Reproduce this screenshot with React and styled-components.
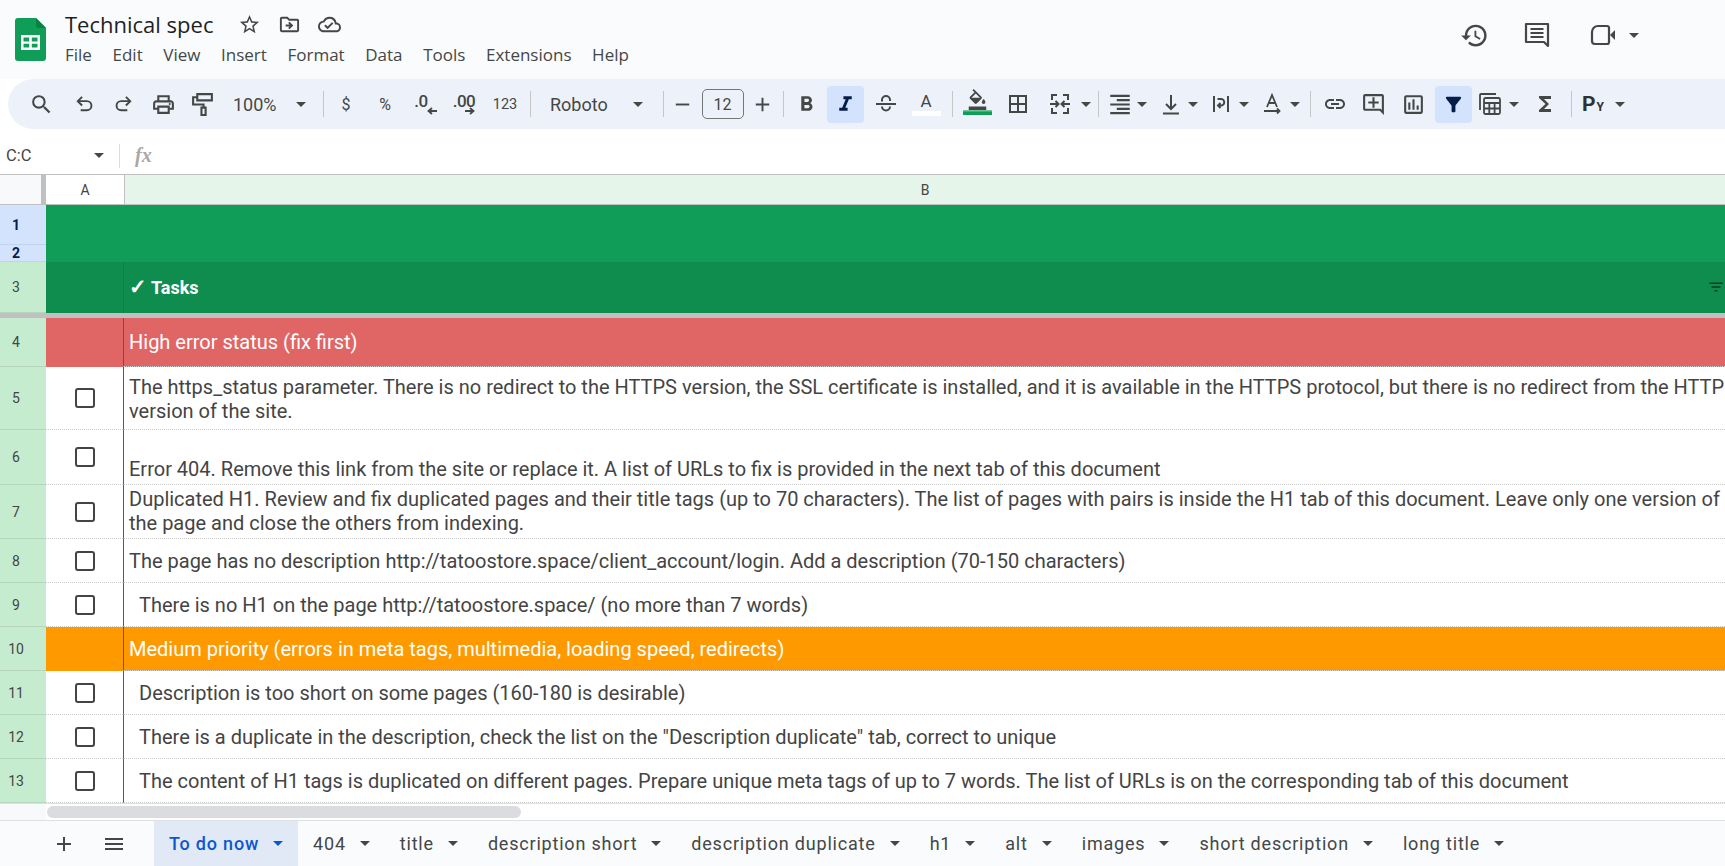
import styled, { createGlobalStyle } from 'styled-components';
import {
  MdSearch, MdOutlinePrint, MdRemove, MdAdd, MdBorderAll, MdFormatAlignRight,
  MdFormatColorFill, MdLink, MdOutlineAddComment, MdOutlineInsertChart, MdFilterAlt,
  MdFunctions, MdHistory, MdStarBorder, MdOutlineDriveFileMove, MdOutlineCloudDone,
  MdMenu, MdFilterList, MdFormatBold, MdFormatItalic,
} from 'react-icons/md';

const GlobalStyle = createGlobalStyle`
  html, body { margin: 0; padding: 0; height: 100%; background: #fff; overflow: hidden; }
  body { font-family: Roboto, "Liberation Sans", sans-serif; }
`;

const Page = styled.div`
  width: 1725px;
  height: 866px;
  display: flex;
  flex-direction: column;
  overflow: hidden;
`;

// top bar
const Header = styled.header`
  height: 79px;
  flex: none;
  background: #f9fbfd;
  display: flex;
  align-items: flex-start;
  padding-left: 15px;
  box-sizing: border-box;
`;
const Logo = styled.svg`
  width: 31px;
  height: 43px;
  margin-top: 18px;
  flex: none;
`;
const TitleBlock = styled.div`
  margin-left: 19px;
  padding-top: 10px;
  flex: 1;
`;
const TitleRow = styled.div`
  display: flex;
  align-items: center;
  height: 28px;
  color: #444746;
`;
const Title = styled.span`
  font-family: "Open Sans", Roboto, sans-serif;
  font-size: 22px;
  color: #1f1f1f;
  width: 164px;
`;
const TitleIcon = styled.span`
  width: 40px;
  display: flex;
  justify-content: center;
  font-size: 23px;
`;
const MenuRow = styled.nav`
  display: flex;
  gap: 20.6px;
  margin-top: 5px;
  font-family: "Open Sans", Roboto, sans-serif;
  font-size: 17px;
  line-height: 24px;
  color: #444746;
`;
const Actions = styled.div`
  display: flex;
  align-items: center;
  height: 70px;
  color: #444746;
  padding-right: 86px;
`;
const ActionIcon = styled.span`
  display: flex;
  font-size: 29px;
  margin-left: ${p => p.$ml || 0}px;
`;

// toolbar
const Toolbar = styled.div`
  height: 50px;
  flex: none;
  margin-left: 8px;
  padding-left: 15px;
  background: #edf2fa;
  border-radius: 25px 0 0 25px;
  display: flex;
  align-items: center;
  color: #444746;
`;
const Tool = styled.span`
  flex: none;
  width: ${p => p.$w || 37}px;
  height: 37px;
  margin-left: ${p => p.$ml || 0}px;
  display: flex;
  align-items: center;
  justify-content: center;
  border-radius: 4px;
  font-size: ${p => p.$size || 23}px;
  background: ${p => (p.$on ? '#d3e3fd' : 'transparent')};
  color: ${p => (p.$on ? '#041e49' : 'inherit')};
`;
const ToolText = styled(Tool)`
  font-size: ${p => p.$size || 16}px;
`;
const Sep = styled.span`
  flex: none;
  width: 1px;
  height: 26px;
  background: #c7c7c7;
  margin-left: ${p => p.$ml || 0}px;
`;
const SelectLabel = styled.span`
  flex: none;
  width: ${p => p.$w}px;
  margin-left: ${p => p.$ml || 0}px;
  font-size: 18px;
`;
const Caret = styled.span`
  flex: none;
  width: 0;
  height: 0;
  box-sizing: content-box;
  border-left: 5px solid transparent;
  border-right: 5px solid transparent;
  border-top: 5px solid ${p => p.$color || '#444746'};
  margin-left: ${p => p.$ml || 0}px;
`;
const SizeBox = styled.span`
  flex: none;
  width: 40px;
  height: 28px;
  margin-left: ${p => p.$ml || 0}px;
  border: 1px solid #747775;
  border-radius: 5px;
  display: flex;
  align-items: center;
  justify-content: center;
  font-size: 16px;
`;
const Decimal = styled.span`
  position: relative;
  font-size: 17px;
  line-height: 14px;
  font-weight: 500;
  letter-spacing: -0.5px;
  top: -3px;
  left: ${p => p.$left || 0}px;
`;
const DecimalArrow = styled.svg`
  position: absolute;
  right: ${p => p.$right}px;
  top: 13px;
  width: 10px;
  height: 8px;
`;
const ColorLetter = styled.span`
  display: flex;
  flex-direction: column;
  align-items: center;
  font-size: 17px;
  line-height: 20px;
  margin-top: -1px;
`;
const Swatch = styled.span`
  display: block;
  width: 29px;
  height: 5px;
  background: ${p => p.$color};
  box-shadow: inset 0 1.5px 0 #ffffff66;
`;
const FillIcon = styled.span`
  display: flex;
  flex-direction: column;
  align-items: center;
  font-size: 21px;
  margin-top: -5px;
`;
const Pv = styled.span`
  font-weight: 700;
  font-size: 21px;
  color: #303030;
  & > small { font-size: 12px; margin-left: 1px; }
`;

// name box / formula bar
const FormulaBar = styled.div`
  height: 45px;
  flex: none;
  box-sizing: border-box;
  padding-top: 8px;
  display: flex;
  align-items: center;
  background: #fff;
  color: #444746;
`;
const NameBox = styled.div`
  width: 120px;
  box-sizing: border-box;
  padding: 0 15px 0 6px;
  display: flex;
  align-items: center;
  justify-content: space-between;
  font-size: 16.5px;
  border-right: 1px solid #dadce0;
  height: 24px;
`;
const Fx = styled.span`
  margin-left: 15px;
  font-family: "Liberation Serif", serif;
  font-style: italic;
  font-size: 20px;
  color: #a8a8a8;
  font-weight: 700;
`;

// sheet
const Sheet = styled.div`
  flex: none;
  border-top: 1px solid #c0c0c0;
`;
const ColHeaders = styled.div`
  display: flex;
  height: 29px;
  border-bottom: 1px solid #c0c0c0;
  font-size: 14px;
  color: #444;
`;
const Corner = styled.div`
  width: 41px;
  background: #f8f9fa;
  border-right: 5px solid #c0c0c0;
`;
const ColHead = styled.div`
  display: flex;
  align-items: center;
  justify-content: center;
  box-sizing: border-box;
  width: ${p => (p.$grow ? 'auto' : '79px')};
  flex: ${p => (p.$grow ? 1 : 'none')};
  background: ${p => (p.$grow ? '#e6f5ea' : '#fff')};
  border-right: ${p => (p.$grow ? 'none' : '1px solid #c0c0c0')};
`;
const Row = styled.div`
  display: flex;
  height: ${p => p.$h}px;
  box-sizing: border-box;
  background: ${p => p.$bg || '#fff'};
  color: ${p => (p.$bg ? '#fff' : '#444')};
`;
const RowNum = styled.div`
  width: 46px;
  flex: none;
  box-sizing: border-box;
  padding-right: 14px;
  display: flex;
  align-items: center;
  justify-content: center;
  font-size: 14px;
  background: ${p => (p.$active ? '#d3e3fd' : '#c6ecd0')};
  color: ${p => (p.$active ? '#041e49' : '#444')};
  font-weight: ${p => (p.$active ? 700 : 400)};
  border-bottom: 1px solid ${p => (p.$active ? '#c2d2ea' : '#b5d6bd')};
`;
const CheckCell = styled.div`
  width: 77px;
  flex: none;
  display: flex;
  align-items: center;
  justify-content: center;
  box-sizing: border-box;
  border-bottom: 1px dotted ${p => (p.$plain ? 'transparent' : '#ccc')};
`;
const Check = styled.span`
  width: 20px;
  height: 20px;
  box-sizing: border-box;
  border: 2.5px solid #444;
  border-radius: 3px;
`;
const TextCell = styled.div`
  flex: 1;
  min-width: 0;
  box-sizing: border-box;
  display: flex;
  align-items: ${p => p.$valign || 'center'};
  padding-left: ${p => (p.$indent ? 15 : 5)}px;
  padding-top: ${p => p.$pt || 0}px;
  padding-bottom: ${p => p.$pb || 0}px;
  border-left: 1px solid ${p => p.$line || '#38761d'};
  border-bottom: 1px dotted ${p => (p.$plain ? 'transparent' : '#ccc')};
  font-size: 20px;
  line-height: 24px;
  white-space: nowrap;
  overflow: hidden;
  position: relative;
`;
const TasksLabel = styled.b`
  font-size: 18px;
  font-weight: 700;
`;
const TaskTick = styled.span`
  font-size: 21px;
`;
const HeaderFilter = styled.span`
  position: absolute;
  right: 0;
  top: 50%;
  margin-top: -9px;
  display: flex;
  font-size: 18px;
  color: #0b3d20;
`;
const FrozenBar = styled.div`
  height: 5px;
  background: #c0c0c0;
`;
const ScrollRow = styled.div`
  height: 17px;
  flex: none;
  display: flex;
  align-items: center;
  border-top: 1px solid #e0e0e0;
  box-sizing: border-box;
  padding-left: 46px;
  background: linear-gradient(to right, #f8f9fa 46px, #fff 46px);
`;
const Thumb = styled.div`
  width: 474px;
  height: 12px;
  margin-left: 1px;
  border-radius: 6px;
  background: #dadce0;
`;

// sheet tabs
const TabBar = styled.div`
  height: 46px;
  flex: none;
  box-sizing: border-box;
  border-top: 1px solid #e0e0e0;
  background: #f9fbfd;
  padding-left: 44px;
  display: flex;
  align-items: stretch;
  color: #444746;
`;
const TabTool = styled.span`
  width: 40px;
  margin-right: ${p => p.$mr}px;
  display: flex;
  align-items: center;
  justify-content: center;
  font-size: 24px;
`;
const Tab = styled.div`
  display: flex;
  align-items: center;
  gap: 14px;
  padding: 0 15px;
  font-size: 18px;
  font-weight: ${p => (p.$active ? 500 : 400)};
  letter-spacing: 0.8px;
  white-space: nowrap;
  background: ${p => (p.$active ? '#e1e9f7' : 'transparent')};
  color: ${p => (p.$active ? '#0b57d0' : 'inherit')};
`;

const Line = ({ children, size = 24, view = 24, width = 2 }) => (
  <svg width={size} height={size} viewBox={`0 0 ${view} ${view}`} fill="none" stroke="currentColor" strokeWidth={width}>
    {children}
  </svg>
);

const rows = [
  { h: 49, num: 4, bg: '#e06666', text: 'High error status (fix first)' },
  { h: 63, num: 5, pt: 2, lines: ['The https_status parameter. There is no redirect to the HTTPS version, the SSL certificate is installed, and it is available in the HTTPS protocol, but there is no redirect from the HTTP', 'version of the site.'] },
  { h: 55, num: 6, valign: 'flex-end', pb: 3, lines: ['Error 404. Remove this link from the site or replace it. A list of URLs to fix is provided in the next tab of this document'] },
  { h: 54, num: 7, valign: 'flex-start', pt: 2, lines: ['Duplicated H1. Review and fix duplicated pages and their title tags (up to 70 characters). The list of pages with pairs is inside the H1 tab of this document. Leave only one version of', 'the page and close the others from indexing.'] },
  { h: 44, num: 8, lines: ['The page has no description http://tatoostore.space/client_account/login. Add a description (70-150 characters)'] },
  { h: 44, num: 9, indent: true, lines: ['There is no H1 on the page http://tatoostore.space/ (no more than 7 words)'] },
  { h: 44, num: 10, bg: '#ff9900', text: 'Medium priority (errors in meta tags, multimedia, loading speed, redirects)' },
  { h: 44, num: 11, indent: true, lines: ['Description is too short on some pages (160-180 is desirable)'] },
  { h: 44, num: 12, indent: true, lines: ['There is a duplicate in the description, check the list on the "Description duplicate" tab, correct to unique'] },
  { h: 44, num: 13, indent: true, lines: ['The content of H1 tags is duplicated on different pages. Prepare unique meta tags of up to 7 words. The list of URLs is on the corresponding tab of this document'] },
];

const tabs = ['To do now', '404', 'title', 'description short', 'description duplicate', 'h1', 'alt', 'images', 'short description', 'long title'];

const menus = ['File', 'Edit', 'View', 'Insert', 'Format', 'Data', 'Tools', 'Extensions', 'Help'];

const App = () => {
  return (
    <>
      <GlobalStyle />
      <Page>
        <Header>
          <Logo viewBox="0 0 31 43">
            <path d="M3 0h18l10 10v30a3 3 0 0 1-3 3H3a3 3 0 0 1-3-3V3a3 3 0 0 1 3-3z" fill="#0f9d58" />
            <path d="M21 0l10 10h-7a3 3 0 0 1-3-3z" fill="#0b8043" />
            <path d="M6 17h19v15H6z M8.500 19.500v4h5.700v-4z M16.800 19.500v4h5.700v-4z M8.500 25.800v3.700h5.700v-3.700z M16.800 25.800v3.700h5.700v-3.700z" fill="#fff" fillRule="evenodd" />
          </Logo>
          <TitleBlock>
            <TitleRow>
              <Title>Technical spec</Title>
              <TitleIcon><MdStarBorder /></TitleIcon>
              <TitleIcon><MdOutlineDriveFileMove /></TitleIcon>
              <TitleIcon><MdOutlineCloudDone /></TitleIcon>
            </TitleRow>
            <MenuRow>
              {menus.map(m => <span key={m}>{m}</span>)}
            </MenuRow>
          </TitleBlock>
          <Actions>
            <ActionIcon><MdHistory /></ActionIcon>
            <ActionIcon $ml={34}>
              <Line size={28} view={28} width={2.2}>
                <path d="M3 3h22v22l-4-4H3z" strokeLinejoin="round" />
                <path d="M7.500 8h13M7.500 12h13M7.500 16h13" />
              </Line>
            </ActionIcon>
            <ActionIcon $ml={38.5}>
              <svg width="28" height="24" viewBox="0 0 28 24" fill="none" stroke="currentColor" strokeWidth="2.200">
                <path d="M9 3h9a2 2 0 0 1 2 2v14a2 2 0 0 1-2 2H6a3 3 0 0 1-3-3V9a6 6 0 0 1 6-6z" />
                <path d="M21 12l5-5v10z" fill="currentColor" stroke="none" />
              </svg>
            </ActionIcon>
            <Caret $ml={12} />
          </Actions>
        </Header>

        <Toolbar>
          <Tool $size={25}><MdSearch /></Tool>
          <Tool $ml={5.5}>
            <Line size={23}><path d="M9.500 4 5 8.500 9.500 13M5 8.500h9.500a4.750 4.750 0 0 1 0 9.500H8" /></Line>
          </Tool>
          <Tool $ml={2}>
            <Line size={23}><path d="M14.500 4 19 8.500 14.500 13M19 8.500H9.500a4.750 4.750 0 0 0 0 9.500H16" /></Line>
          </Tool>
          <Tool $ml={3} $size={25}><MdOutlinePrint /></Tool>
          <Tool $ml={2}>
            <Line size={25}>
              <path d="M7 2h14v6H7zM7 5H3v7h10v3" />
              <path d="M11 15h4v7h-4z" />
            </Line>
          </Tool>
          <SelectLabel $ml={12.5} $w={63}>100%</SelectLabel>
          <Caret />
          <Sep $ml={17} />
          <ToolText $ml={3.5}>$</ToolText>
          <ToolText $ml={2}>%</ToolText>
          <ToolText $ml={2}>
            <Decimal $left={-3}>.0<DecimalArrow $right={-9} viewBox="0 0 10 8"><path d="M10 4H2M5 1 1.500 4 5 7" fill="none" stroke="currentColor" strokeWidth="1.800" /></DecimalArrow></Decimal>
          </ToolText>
          <ToolText $ml={3}>
            <Decimal>.00<DecimalArrow $right={0} viewBox="0 0 10 8"><path d="M0 4h8M5 1l3.500 3L5 7" fill="none" stroke="currentColor" strokeWidth="1.800" /></DecimalArrow></Decimal>
          </ToolText>
          <ToolText $ml={4} $size={14.500}>123</ToolText>
          <Sep $ml={6.5} />
          <SelectLabel $ml={19} $w={83}>Roboto</SelectLabel>
          <Caret />
          <Sep $ml={20} />
          <Tool><MdRemove /></Tool>
          <SizeBox $ml={0.5}>12</SizeBox>
          <Tool><MdAdd /></Tool>
          <Sep $ml={2.5} />
          <Tool $ml={3.5} $size={25}><MdFormatBold /></Tool>
          <Tool $ml={2.5} $size={25} $on><MdFormatItalic /></Tool>
          <Tool $ml={3.5}>
            <Line size={24}><path d="M2 12h20M8 9.500V8a4 4 0 0 1 8 0v1M8 14.500a4 4 0 0 0 8 0" /></Line>
          </Tool>
          <Tool $ml={3}>
            <ColorLetter>A<Swatch $color="#fff" /></ColorLetter>
          </Tool>
          <Sep $ml={7.5} />
          <Tool $ml={5.5}>
            <FillIcon><MdFormatColorFill /><Swatch $color="#0f9d58" /></FillIcon>
          </Tool>
          <Tool $ml={3.500} $size={24}><MdBorderAll /></Tool>
          <Tool $ml={5}>
            <Line size={24}>
              <path d="M9 3H4v5M4 16v5h5M15 3h5v5M20 16v5h-5M2 12h8M7.500 9l3 3-3 3M22 12h-8M16.500 9l-3 3 3 3" />
            </Line>
          </Tool>
          <Caret $ml={2.5} />
          <Sep $ml={7} />
          <Tool $ml={8} $w={26} $size={27}><MdFormatAlignRight /></Tool>
          <Caret $ml={4} />
          <Tool $ml={11.500} $w={26}>
            <Line size={24}><path d="M12 3v14M7 12l5 5 5-5M4 21.500h16" /></Line>
          </Tool>
          <Caret $ml={4} />
          <Tool $ml={10} $w={26}>
            <Line size={24}><path d="M5 4v16M19 4v16M8.500 7H12a3 3 0 0 1 0 6.500H9.500M11.500 11 9 13.500l2.500 2.500" /></Line>
          </Tool>
          <Caret $ml={5} />
          <Tool $ml={10} $w={26}>
            <Line size={24} width={1.800}><path d="m7 15 5-12 5 12M8.700 11h6.600M4 19h14M17 16.500l2.500 2.500-2.500 2.500" /></Line>
          </Tool>
          <Caret $ml={5} />
          <Sep $ml={10} />
          <Tool $ml={5} $size={24}><MdLink /></Tool>
          <Tool $ml={2} $size={25}><MdOutlineAddComment /></Tool>
          <Tool $ml={3} $size={25}><MdOutlineInsertChart /></Tool>
          <Tool $ml={2.5} $on><MdFilterAlt /></Tool>
          <Tool $ml={5.500} $w={26}>
            <Line size={26} view={26} width={1.800}>
              <path d="M3 19V4a1 1 0 0 1 1-1h15" />
              <rect x="7" y="7" width="16" height="16" rx="1.500" />
              <path d="M7 12h16M7 17.500h16M12.300 12v11M17.600 12v11" />
            </Line>
          </Tool>
          <Caret $ml={5.5} />
          <Tool $ml={8} $size={24}><MdFunctions /></Tool>
          <Sep $ml={7} />
          <Tool $ml={8.500} $w={26}><Pv>P<small>Y</small></Pv></Tool>
          <Caret $ml={9} />
        </Toolbar>

        <FormulaBar>
          <NameBox>C:C<Caret /></NameBox>
          <Fx>fx</Fx>
        </FormulaBar>

        <Sheet>
          <ColHeaders>
            <Corner />
            <ColHead>A</ColHead>
            <ColHead $grow>B</ColHead>
          </ColHeaders>
          <Row $h={40} $bg="#0f9d58"><RowNum $active>1</RowNum></Row>
          <Row $h={17} $bg="#0f9d58"><RowNum $active>2</RowNum></Row>
          <Row $h={51} $bg="#0f8d4f">
            <RowNum>3</RowNum>
            <CheckCell $plain />
            <TextCell $line="#0d8045" $plain>
              <TasksLabel><TaskTick>✓</TaskTick> Tasks</TasksLabel>
              <HeaderFilter><MdFilterList /></HeaderFilter>
            </TextCell>
          </Row>
          <FrozenBar />
          {rows.map(r => (
            <Row key={r.num} $h={r.h} $bg={r.bg}>
              <RowNum>{r.num}</RowNum>
              <CheckCell $plain={r.bg}>{!r.bg && <Check />}</CheckCell>
              <TextCell $indent={r.indent} $valign={r.valign} $pt={r.pt} $pb={r.pb}>
                {r.text ? r.text : <span>{r.lines.map((l, i) => <div key={i}>{l}</div>)}</span>}
              </TextCell>
            </Row>
          ))}
        </Sheet>

        <ScrollRow><Thumb /></ScrollRow>

        <TabBar>
          <TabTool $mr={10}><MdAdd /></TabTool>
          <TabTool $mr={20}><MdMenu /></TabTool>
          {tabs.map((t, i) => (
            <Tab key={t} $active={i === 0}>
              {t}
              <Caret $color={i === 0 ? '#0b57d0' : undefined} />
            </Tab>
          ))}
        </TabBar>
      </Page>
    </>
  );
};

export default App;
